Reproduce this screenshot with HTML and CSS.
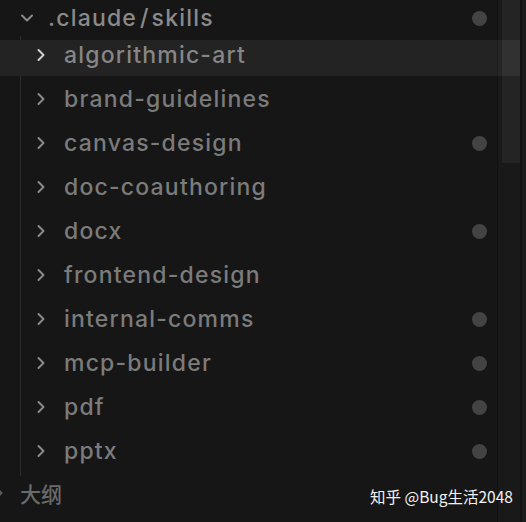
FILE: index.html
```html
<!DOCTYPE html>
<html lang="zh">
<head>
<meta charset="utf-8">
<link rel="stylesheet" href="styles.css">
</head>
<body>
<div class="explorer">
  <div class="tree">
    <div class="row header">
      <div class="inner">
        <svg class="chev down" viewBox="0 0 14 10"><path d="M2 2.5 L7 7.5 L12 2.5" /></svg>
        <span class="label">.claude<span class="sep">/</span>skills</span>
        <span class="dot"></span>
      </div>
    </div>
    <div class="children">
      <div class="row active"><div class="inner"><svg class="chev right" viewBox="0 0 10 14"><path d="M2.5 2 L7.5 7 L2.5 12" /></svg><span class="label">algorithmic-art</span></div></div>
      <div class="row"><div class="inner"><svg class="chev right" viewBox="0 0 10 14"><path d="M2.5 2 L7.5 7 L2.5 12" /></svg><span class="label">brand-guidelines</span></div></div>
      <div class="row"><div class="inner"><svg class="chev right" viewBox="0 0 10 14"><path d="M2.5 2 L7.5 7 L2.5 12" /></svg><span class="label">canvas-design</span><span class="dot"></span></div></div>
      <div class="row"><div class="inner"><svg class="chev right" viewBox="0 0 10 14"><path d="M2.5 2 L7.5 7 L2.5 12" /></svg><span class="label">doc-coauthoring</span></div></div>
      <div class="row"><div class="inner"><svg class="chev right" viewBox="0 0 10 14"><path d="M2.5 2 L7.5 7 L2.5 12" /></svg><span class="label">docx</span><span class="dot"></span></div></div>
      <div class="row"><div class="inner"><svg class="chev right" viewBox="0 0 10 14"><path d="M2.5 2 L7.5 7 L2.5 12" /></svg><span class="label">frontend-design</span></div></div>
      <div class="row"><div class="inner"><svg class="chev right" viewBox="0 0 10 14"><path d="M2.5 2 L7.5 7 L2.5 12" /></svg><span class="label">internal-comms</span><span class="dot"></span></div></div>
      <div class="row"><div class="inner"><svg class="chev right" viewBox="0 0 10 14"><path d="M2.5 2 L7.5 7 L2.5 12" /></svg><span class="label">mcp-builder</span><span class="dot"></span></div></div>
      <div class="row"><div class="inner"><svg class="chev right" viewBox="0 0 10 14"><path d="M2.5 2 L7.5 7 L2.5 12" /></svg><span class="label">pdf</span><span class="dot"></span></div></div>
      <div class="row"><div class="inner"><svg class="chev right" viewBox="0 0 10 14"><path d="M2.5 2 L7.5 7 L2.5 12" /></svg><span class="label">pptx</span><span class="dot"></span></div></div>
    </div>
  </div>
  <div class="section">
    <svg class="chev sec" viewBox="0 0 10 14"><path d="M2.5 2 L7.5 7 L2.5 12" /></svg>
    <span class="section-title">大纲</span>
  </div>
  <div class="scrollbar"><div class="thumb"></div></div>
  <div class="watermark">知乎 @Bug生活2048</div>
</div>
</body>
</html>
```
FILE: styles.css
```css
html, body {
  margin: 0;
  padding: 0;
  background: #161616;
}
.explorer {
  position: relative;
  width: 526px;
  height: 522px;
  overflow: hidden;
  background: #161616;
  font-family: Inter, "Liberation Sans", "Noto Sans CJK SC", sans-serif;
  display: flex;
  flex-direction: column;
}
.tree {
  display: flex;
  flex-direction: column;
}
.row {
  height: 44px;
  padding: 4px 0;
  box-sizing: border-box;
}
.row .inner {
  height: 36px;
  display: flex;
  align-items: center;
  padding-right: 39px;
  padding-bottom: 6px;
  box-sizing: border-box;
}
.header {
  height: 36px;
  padding: 0;
}
.header .inner {
  padding-left: 20px;
  padding-bottom: 0;
}
.row.active .inner {
  background: #232323;
}
.children {
  margin-left: 20px;
  border-left: 1px solid #2c2c2c;
  padding-bottom: 0;
  margin-bottom: -3px;
}
.children .row {
  margin-left: -21px;
}
.children .inner {
  padding-left: 36px;
}
.chev {
  flex: none;
  fill: none;
  stroke: #8a8a8a;
  stroke-width: 2;
  stroke-linecap: round;
  stroke-linejoin: round;
}
.chev.down {
  width: 14px;
  height: 10px;
  margin-right: 14px;
}
.chev.right {
  width: 10px;
  height: 14px;
  margin-right: 18px;
}
.row.active .chev {
  stroke: #d0d0d0;
}
.label {
  flex: 1;
  font-size: 23px;
  font-weight: 500;
  letter-spacing: 1.2px;
  color: #7b7b7b;
  white-space: nowrap;
}
.row.active .label {
  color: #868686;
}
.header .label {
  color: #8a8a8a;
}
.sep {
  margin: 0 3px;
  letter-spacing: 0;
}
.dot {
  flex: none;
  width: 15px;
  height: 15px;
  border-radius: 50%;
  background: #434343;
}
.section {
  display: flex;
  align-items: center;
  height: 36px;
  margin-top: 2px;
  margin-left: -6px;
}
.chev.sec {
  width: 10px;
  height: 14px;
  margin-right: 16px;
  stroke: #5a5a5a;
}
.section-title {
  font-family: "Noto Sans CJK SC", sans-serif;
  font-size: 21px;
  font-weight: 500;
  color: #6a6a6a;
}
.scrollbar {
  position: absolute;
  top: 0;
  right: 0;
  width: 29px;
  height: 100%;
  border-left: 1px solid rgba(0, 0, 0, 0.25);
  box-sizing: border-box;
  background: rgba(255, 255, 255, 0.015);
}
.scrollbar::after {
  content: "";
  position: absolute;
  top: 0;
  right: 0;
  width: 6px;
  height: 100%;
  border-left: 2px solid #131313;
  box-sizing: border-box;
  background: #1c1c1c;
}
.thumb {
  width: 18px;
  height: 163px;
  margin-left: 4px;
  background: rgba(255, 255, 255, 0.05);
}
.watermark {
  position: absolute;
  left: 370px;
  top: 485px;
  font-family: "Noto Sans CJK SC", sans-serif;
  font-size: 15.5px;
  color: #f2f2f2;
  white-space: nowrap;
}
```
